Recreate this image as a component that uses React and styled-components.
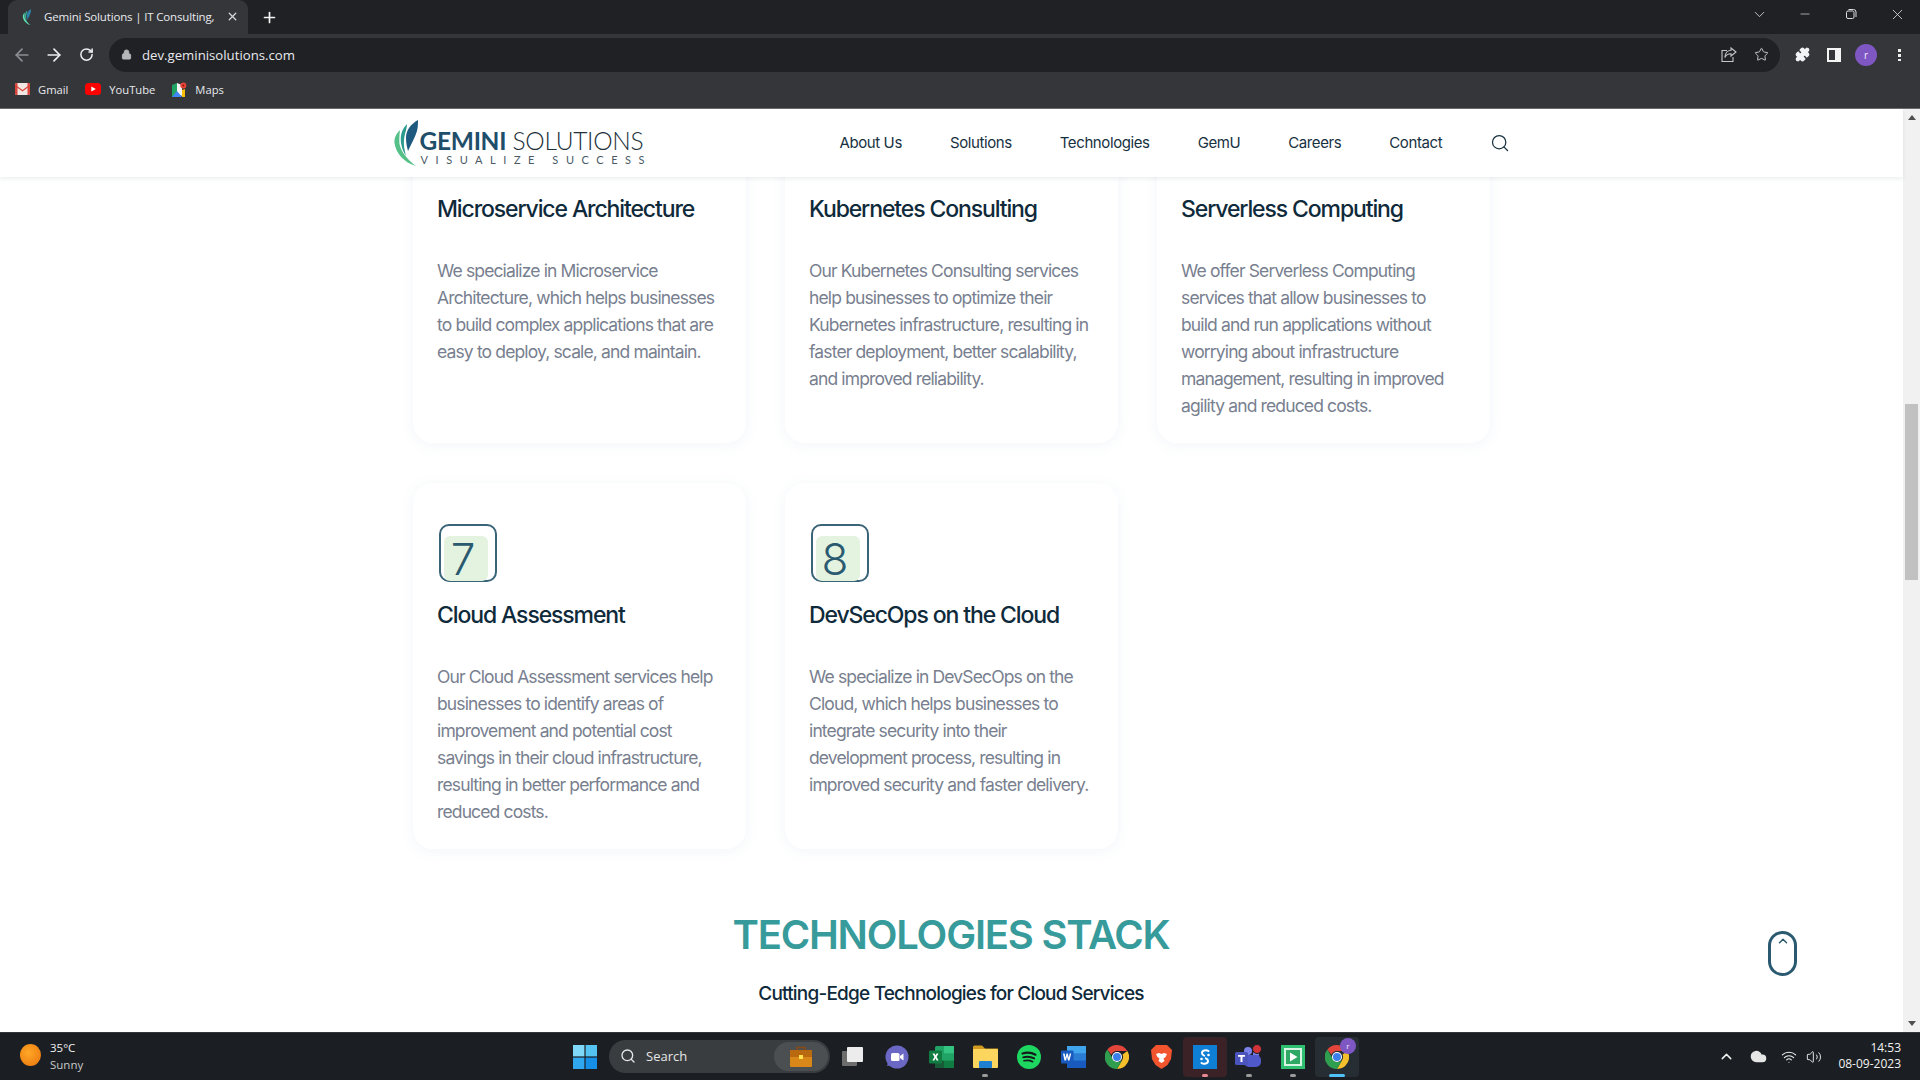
import React from "react";
import styled, { createGlobalStyle } from "styled-components";
import {
  ArrowLeft, ArrowRight, RotateCw, Lock, Star, Puzzle, Search, ChevronDown, Minus, X, Plus, ChevronUp, Wifi, Volume2, Cloud,
} from "lucide-react";

const Global = createGlobalStyle`
  html, body { margin: 0; padding: 0; background: #fff; }
  * { box-sizing: border-box; }
  body { font-family: "Inter", "Liberation Sans", sans-serif; }
`;

const Window = styled.div`
  width: 1920px; height: 1080px; display: flex; flex-direction: column; overflow: hidden;
`;

/* ---------- browser chrome ---------- */
const TabStrip = styled.div`
  height: 34px; background: #202124; display: flex; align-items: flex-end; padding-left: 8px; flex: none;
`;
const Tab = styled.div`
  width: 240px; height: 34px; background: #35363a; border-radius: 9px 9px 0 0;
  display: flex; align-items: center; padding: 0 7px 1px 11px; color: #e8eaed;
  font: 11.5px "Open Sans", "Noto Sans", sans-serif;
`;
const TabTitle = styled.span`
  margin-left: 9px; width: 175px; white-space: nowrap; letter-spacing: -0.16px;
`;
const TabClose = styled.div`
  margin-left: 7px; display: flex; color: #d8d8d8;
`;
const StripAction = styled.div`
  margin-left: 13px; height: 34px; display: flex; align-items: center; color: #f1f3f4;
`;
const WindowControls = styled.div`
  margin-left: auto; height: 34px; display: flex; align-items: center; color: #dadce0;
`;
const ControlSlot = styled.div`
  width: 46px; display: flex; justify-content: center; align-items: center; padding-bottom: 6px;
`;
const RestoreIcon = () => (
  <svg width="12" height="12" viewBox="0 0 12 12" fill="none" stroke="currentColor" strokeWidth="1">
    <rect x="1.5" y="3" width="7.5" height="7.5" rx="1.5" />
    <path d="M3.5 1.5h5a2.5 2.5 0 0 1 2.5 2.5v5" />
  </svg>
);
const ShareIcon = () => (
  <svg width="16" height="15" viewBox="0 0 16 15" fill="none" stroke="currentColor" strokeWidth="1.1">
    <path d="M6 3.5H1v11h11V10" />
    <path d="M10 1l5 4-5 4V6.800C7 6.800 5 8 3.800 10.500 4 6.500 6.500 3.400 10 3.200z" />
  </svg>
);

const Toolbar = styled.div`
  height: 38px; background: #35363a; display: flex; align-items: center; flex: none; padding: 3px 0 0 6px;
`;
const NavButton = styled.div`
  width: 32px; display: flex; align-items: center; justify-content: center; color: ${(p) => (p.$off ? "#8d8f94" : "#eceef0")};
`;
const Omnibox = styled.div`
  width: 1671px; height: 34px; margin-left: 7px; background: #202124; border-radius: 17px;
  display: flex; align-items: center; padding: 0 3px 0 12px; color: #e8eaed;
  font: 13.2px "Open Sans", "Noto Sans", sans-serif;
`;
const UrlText = styled.span`
  margin-left: 10px; flex: 1;
`;
const OmniIcon = styled.div`
  width: 32px; display: flex; justify-content: center; color: #c4c7c9;
`;
const ToolGroup = styled.div`
  margin-left: 6px; display: flex; align-items: center;
`;
const ToolIcon = styled.div`
  width: 32px; display: flex; justify-content: center; color: #f1f3f4;
`;
const Avatar = styled.div`
  width: 22px; height: 22px; border-radius: 50%; background: #7e57c2; color: #f3e8ff;
  font: 10px "Open Sans", sans-serif; display: flex; align-items: center; justify-content: center;
`;
const BadgeAvatar = styled(Avatar)`
  position: absolute; top: 1px; right: 3px; width: 16px; height: 16px; font-size: 8px;
`;
const Dots = styled.div`
  width: 3px; height: 13px; margin-left: 16px;
  background: radial-gradient(circle, #eee 1.6px, transparent 1.9px) 0 0 / 3px 5px;
`;
const SidePanel = styled.div`
  width: 14px; height: 14px; border: 2px solid #f4f4f4; border-right-width: 6px; background: #35363a;
`;

const BookmarksBar = styled.div`
  height: 37px; background: #35363a; border-bottom: 1px solid #6a6b6e; display: flex; align-items: center; flex: none;
  padding: 0 0 2px 15px; color: #e8eaed; font: 11.2px "Open Sans", "Noto Sans", sans-serif;
`;
const Bookmark = styled.div`
  display: flex; align-items: center; gap: 8px; margin-right: 17px;
`;

const GmailIcon = () => (
  <svg width="15" height="12" viewBox="0 0 15 12">
    <rect width="15" height="12" rx="1.5" fill="#f2e6e3" />
    <path d="M0 1.5 7.5 7 15 1.5V3L7.5 8.5 0 3z" fill="#d9453a" />
    <path d="M0 1.5C0 .5.6 0 1.5 0L2.5 0V12H1.5C.6 12 0 11.5 0 10.5zM15 1.5C15 .5 14.4 0 13.5 0L12.5 0V12H13.5c.9 0 1.5-.5 1.5-1.5z" fill="#d9453a" />
  </svg>
);
const YouTubeIcon = () => (
  <svg width="16" height="12" viewBox="0 0 16 12">
    <rect width="16" height="12" rx="3.5" fill="#f00" />
    <path d="M6.3 3.4 10.8 6 6.3 8.6z" fill="#fff" />
  </svg>
);
const MapsIcon = () => (
  <svg width="15" height="15" viewBox="0 0 15 15">
    <path d="M0 3 5 1v13L0 15z" fill="#1fa463" />
    <path d="M5 1l5 2v11l-5-2z" fill="#f1f3f4" />
    <path d="M5 9l-5 6h10z" fill="#4285f4" />
    <path d="M10 8l3-1v8h-3z" fill="#fbbc04" />
    <circle cx="11.3" cy="3.6" r="3" fill="#ea4335" />
    <circle cx="11.3" cy="3.6" r="1" fill="#7c1d16" />
  </svg>
);

/* ---------- page ---------- */
const Viewport = styled.div`
  flex: 1; display: flex; min-height: 0; background: #fff;
`;
const Page = styled.div`
  flex: 1; display: flex; flex-direction: column; min-width: 0;
`;
const Header = styled.header`
  height: 68px; flex: none; background: #fff; box-shadow: 0 2px 4px rgba(30, 50, 70, 0.08); position: relative; z-index: 2;
  display: flex; justify-content: center;
`;
const HeaderInner = styled.div`
  width: 1120px; display: flex; align-items: center; padding-bottom: 1px;
`;
const LogoWrap = styled.div`
  display: flex; align-items: center; width: 253px; flex: none; padding-left: 2px;
  svg { flex: none; }
`;
const LogoText = styled.div`
  margin-left: 1px; display: flex; flex-direction: column; padding-top: 8px;
`;
const LogoName = styled.div`
  font: 300 24.5px/26px "Lato", "Open Sans", sans-serif; color: #22303a; white-space: nowrap; letter-spacing: -0.3px;
`;
const LogoStrong = styled.span`
  color: #1f4e6b; font-weight: 700;
`;
const LogoTag = styled.div`
  font: 400 11px/11px "Lato", sans-serif; color: #4a5a66; letter-spacing: 7.55px; margin-left: 1px; white-space: nowrap;
`;
const Nav = styled.nav`
  margin-left: 195px; display: flex; gap: 48px; align-items: center;
`;
const NavLink = styled.a`
  font: 400 15px/20px "Inter", sans-serif; color: #17313f; letter-spacing: -0.4px; white-space: nowrap;
`;
const SearchBtn = styled.div`
  margin-left: 48px; display: flex; color: #17313f;
`;

const Scroller = styled.div`
  flex: 1; overflow: hidden; position: relative; min-height: 0;
`;
const Content = styled.div`
  margin-top: -100px;
`;
const CardGrid = styled.div`
  width: 1077px; margin: 0 auto; display: grid; grid-template-columns: repeat(3, 333px); gap: 40px 39px;
`;
const Card = styled.article`
  height: 366px; background: #fff; border-radius: 20px; padding: 41px 27px 0 24px; box-shadow: 0 2px 14px rgba(70, 110, 150, 0.07);
`;
const NumberBadge = styled.div`
  width: 58px; height: 58px; margin-left: 2px; border: 2px solid #3a6478; border-radius: 10px; position: relative;
  display: flex; align-items: center; justify-content: center;
  font: 300 44px/1 "Inter", sans-serif; color: #2b5a70; padding: 12px 10px 0 0;
  &::before {
    content: ""; position: absolute; left: 3px; top: 10px; width: 44px; height: 45px; border-radius: 6px; background: #e3f3e0;
  }
`;
const NumberText = styled.span`
  position: relative;
`;
const CardTitle = styled.h3`
  margin: 18px 0 0; font: 500 23px/30px "Inter", sans-serif; color: #0f2a3a; letter-spacing: -1.12px; white-space: nowrap;
`;
const CardBody = styled.p`
  margin: 33px 0 0; font: 400 17.5px/27px "Inter", sans-serif; color: #78808f; letter-spacing: -0.86px;
`;
const Section = styled.section`
  text-align: center; margin-top: 61px; padding-right: 1px;
`;
const SectionTitle = styled.h2`
  margin: 0; font: 600 40px/50px "Inter", sans-serif; color: #389b9b; letter-spacing: -1.2px;
`;
const SectionSub = styled.p`
  margin: 21px 0 0; font: 500 19px/26px "Inter", sans-serif; color: #0f2a3a; letter-spacing: -0.8px;
`;
const ScrollTop = styled.div`
  position: absolute; left: 1768px; top: 754px; width: 29px; height: 45px; border: 3px solid #2b5a70; border-radius: 15px;
  display: flex; justify-content: center; color: #2b5a70;
`;

const Scrollbar = styled.div`
  width: 17px; flex: none; background: #f1f1f1; display: flex; flex-direction: column; align-items: center; position: relative;
`;
const ScrollThumb = styled.div`
  position: absolute; top: 295px; left: 2px; width: 13px; height: 176px; background: #c1c1c1;
`;
const ScrollArrow = styled.div`
  height: 17px; display: flex; align-items: center; justify-content: center;
  &:last-child { margin-top: auto; }
`;
const Tri = styled.div`
  width: 0; height: 0; border-left: 4px solid transparent; border-right: 4px solid transparent;
  ${(p) => (p.$down ? "border-top: 5px solid #505050;" : "border-bottom: 5px solid #505050;")}
`;

/* ---------- taskbar ---------- */
const Taskbar = styled.div`
  height: 48px; flex: none; background: #1b1f23; border-top: 1px solid #33373b; display: flex; align-items: center; color: #f2f2f2; position: relative;
  font: 11px "Open Sans", "Noto Sans", sans-serif;
`;
const Weather = styled.div`
  width: 563px; padding: 0 0 3px 20px; display: flex; align-items: center; gap: 9px; flex: none;
`;
const Sun = styled.div`
  width: 21px; height: 22px; border-radius: 50%; background: radial-gradient(circle at 40% 40%, #ffa726, #e8730c);
`;
const WeatherText = styled.div`
  display: flex; flex-direction: column; line-height: 17px; font-size: 11.5px; margin-top: 1px;
`;
const Muted = styled.span`
  color: #c9c9c9;
`;
const AppSlot = styled.div`
  width: 44px; height: 40px; display: flex; align-items: center; justify-content: center; position: relative; flex: none; border-radius: 4px;
  background: ${(p) => p.$bg || "transparent"};
`;
const RunDot = styled.div`
  position: absolute; bottom: 0; left: 50%; transform: translateX(-50%); height: 3px; border-radius: 2px;
  width: ${(p) => p.$w || 6}px; background: ${(p) => p.$c || "#9b9b9b"};
`;
const SearchPill = styled.div`
  width: 221px; height: 33px; border-radius: 17px; background: #3a3d40; margin: 0 1px 0 2px; display: flex; align-items: center; padding: 0 0 1px 11px; gap: 10px;
  font-size: 13px; color: #e6e6e6; position: relative; flex: none;
`;
const PillBadge = styled.div`
  position: absolute; right: 2px; top: 2px; width: 54px; height: 29px; border-radius: 15px; background: #4c4f52;
  display: flex; align-items: center; justify-content: center;
`;
const Tray = styled.div`
  margin-left: auto; display: flex; align-items: center; padding-right: 19px;
`;
const TrayIcon = styled.div`
  width: ${(p) => p.$w || 32}px; display: flex; justify-content: center; color: #f2f2f2;
`;
const Clock = styled.div`
  margin-left: 13px; text-align: right; line-height: 16px; font-size: 12px; width: 64px; margin-top: -2px;
`;

const WinLogo = () => (
  <svg width="24" height="24" viewBox="0 0 24 24">
    <rect width="11.4" height="11.4" fill="#7fd8f8" />
    <rect x="12.6" width="11.4" height="11.4" fill="#55c3f2" />
    <rect y="12.6" width="11.4" height="11.4" fill="#2fa8ef" />
    <rect x="12.6" y="12.6" width="11.4" height="11.4" fill="#1590e6" />
  </svg>
);
const TaskView = () => (
  <svg width="22" height="22" viewBox="0 0 22 22">
    <rect y="5" width="15" height="15" rx="1" fill="#6d6d6d" />
    <rect x="5" y="1" width="16" height="15" rx="1" fill="#ececec" />
  </svg>
);
const Meet = () => (
  <svg width="24" height="24" viewBox="0 0 24 24">
    <circle cx="12" cy="12" r="11.5" fill="#6b67c4" />
    <path d="M2 21l2-6 5 5z" fill="#6b67c4" />
    <rect x="6" y="8" width="8.5" height="8" rx="1.5" fill="#fff" />
    <path d="M15 11l3.5-2.5v7L15 13z" fill="#fff" />
  </svg>
);
const Excel = () => (
  <svg width="25" height="22" viewBox="0 0 25 22">
    <rect x="6" width="19" height="22" rx="1.5" fill="#21a366" />
    <rect x="15" width="10" height="7.3" fill="#33c481" />
    <rect x="15" y="14.6" width="10" height="7.4" fill="#107c41" />
    <rect x="6" y="14.6" width="9" height="7.4" fill="#185c37" />
    <rect y="4.5" width="13" height="13" rx="1" fill="#107c41" />
    <path d="M3.5 7.5h2l1 2 1-2h2L7.6 11l2 3.5h-2l-1.1-2.2L5.4 14.5h-2l2-3.5z" fill="#fff" />
  </svg>
);
const Folder = () => (
  <svg width="25" height="23" viewBox="0 0 25 23">
    <path d="M0 2a1.5 1.5 0 0 1 1.5-1.5H9l3 3h13V6H0z" fill="#d29b1f" />
    <rect y="4" width="25" height="19" rx="1" fill="#fcd55f" />
    <rect x="6" y="16" width="13" height="7" rx="1" fill="#1f7fd0" />
  </svg>
);
const Spotify = () => (
  <svg width="24" height="24" viewBox="0 0 24 24" fill="none" strokeLinecap="round">
    <circle cx="12" cy="12" r="12" fill="#1ed760" />
    <path d="M5.5 8.5c4.5-1.3 9-1 13 1.2" stroke="#15191c" strokeWidth="2.2" />
    <path d="M6.2 12.3c3.8-1 7.5-.7 11 1.1" stroke="#15191c" strokeWidth="1.9" />
    <path d="M7 15.8c3-.7 6-.5 8.7.9" stroke="#15191c" strokeWidth="1.6" />
  </svg>
);
const Word = () => (
  <svg width="25" height="22" viewBox="0 0 25 22">
    <rect x="6" width="19" height="22" rx="1.5" fill="#2b7cd3" />
    <rect x="6" width="19" height="7.3" fill="#41a5ee" />
    <rect x="6" y="14.6" width="19" height="7.4" fill="#185abd" />
    <rect y="4.5" width="12.5" height="13" rx="1" fill="#185abd" />
    <path d="M2 7.5h1.6l.9 4.3 1-4.3h1.3l1 4.3.9-4.3h1.5L8.5 14.5H7L6 10.5l-1 4H3.5z" fill="#fff" />
  </svg>
);
const ChromeLogo = () => (
  <svg width="24" height="24" viewBox="0 0 24 24">
    <path d="M12 0a12 12 0 0 1 10.4 6H12a6 6 0 0 0-5.6 3.8L2.4 4.5A12 12 0 0 1 12 0z" fill="#e2453a" />
    <path d="M22.4 6A12 12 0 0 1 12 24l4.9-8.5A6 6 0 0 0 17.5 9.5L22.4 6z" fill="#f5c02c" />
    <path d="M12 24A12 12 0 0 1 2.4 4.5l4.8 8.3A6 6 0 0 0 16.9 15.5L12 24z" fill="#2f9e4f" />
    <circle cx="12" cy="12" r="5" fill="#fff" />
    <circle cx="12" cy="12" r="4" fill="#3c7fea" />
  </svg>
);
const Brave = () => (
  <svg width="21" height="24" viewBox="0 0 21 24">
    <path d="M5 0h11l2.500 2.500L21 5l-1 9-3.500 6L10.500 24 4.500 20 1 14 0 5l2.500-2.500z" fill="#f2542d" />
    <path d="M5 9l3-1 2.500 1L13 8l3 1-1.500 3-2 1.500 1 2.500-3 2-3-2 1-2.500-2-1.500z" fill="#fff" />
  </svg>
);
const StudioS = () => (
  <svg width="24" height="24" viewBox="0 0 24 24" fill="none">
    <rect width="24" height="24" fill="#0f7fd6" />
    <path d="M15.500 6C13 4.500 9 5.500 9 8c0 1.400 1 2.200 2.200 2.600" stroke="#fff" strokeWidth="2" strokeLinecap="round" />
    <path d="M8.500 18c2.500 1.500 6.500.5 6.500-2 0-1.400-1-2.200-2.200-2.600" stroke="#fff" strokeWidth="2" strokeLinecap="round" />
    <circle cx="15.500" cy="10" r="1.300" fill="#fff" />
    <circle cx="8.500" cy="14" r="1.300" fill="#fff" />
  </svg>
);
const Teams = () => (
  <svg width="28" height="26" viewBox="0 0 28 26">
    <circle cx="21" cy="10" r="3" fill="#7b83eb" />
    <rect x="9" y="11" width="17" height="12" rx="5" fill="#5059c9" />
    <circle cx="13" cy="7" r="4" fill="#7b83eb" />
    <rect y="8" width="13" height="13" rx="1.500" fill="#4b53bc" />
    <path d="M3 11h7v1.800H7.500V18h-2v-5.200H3z" fill="#fff" />
    <circle cx="22" cy="5" r="4.500" fill="#d13438" stroke="#1b1f23" strokeWidth="1" />
  </svg>
);
const Player = () => (
  <svg width="24" height="24" viewBox="0 0 24 24">
    <rect width="24" height="24" fill="#2fbf71" />
    <rect x="3" y="3" width="18" height="18" fill="#d8f5e4" />
    <rect x="5" y="5" width="14" height="14" fill="#2fa866" />
    <path d="M9 7.500 16.500 12 9 16.500z" fill="#fff" />
  </svg>
);
const Suitcase = () => (
  <svg width="22" height="21" viewBox="0 0 22 21">
    <path d="M7 4V1.500h8V4" fill="none" stroke="#8a4a12" strokeWidth="1.500" />
    <rect y="4" width="22" height="17" rx="1" fill="#d98718" />
    <rect y="4" width="22" height="7" fill="#b9690f" />
    <rect x="9" y="9" width="4" height="4" fill="#ffe14d" />
  </svg>
);
const LogoLeaf = () => (
  <svg width="25" height="46" viewBox="0 0 25 46">
    <path d="M6 10C2 14 0 18 .5 23 2 33 9 42 22 46 14 40 7 32 5.500 24 5 19 5.500 14 6 10z" fill="#55c088" />
    <path d="M13 4C8 9 6 15 7 23c1 6 3 10 5 13-2-8-3-14-1-22 1-4 2-7 2-10z" fill="#2d9a90" />
    <path d="M24 0c-7 4-12 10-12 18 0 5 1 9 2 13 3-7 7-13 9-20 1-4 1-8 1-11z" fill="#1e5a80" />
  </svg>
);
const Favicon = () => (
  <svg width="16" height="16" viewBox="0 0 25 46">
    <path d="M6 10C2 14 0 18 .5 23 2 33 9 42 22 46 14 40 7 32 5.500 24 5 19 5.500 14 6 10z" fill="#5fe0b0" />
    <path d="M13 4C8 9 6 15 7 23c1 6 3 10 5 13-2-8-3-14-1-22 1-4 2-7 2-10z" fill="#35c0a8" />
    <path d="M24 0c-7 4-12 10-12 18 0 5 1 9 2 13 3-7 7-13 9-20 1-4 1-8 1-11z" fill="#2f80a8" />
  </svg>
);

/* The first row is scrolled under the sticky header: its number badges are out of sight. */
const cards = [
  { title: "Microservice Architecture", body: "We specialize in Microservice Architecture, which helps businesses to build complex applications that are easy to deploy, scale, and maintain." },
  { title: "Kubernetes Consulting", body: "Our Kubernetes Consulting services help businesses to optimize their Kubernetes infrastructure, resulting in faster deployment, better scalability, and improved reliability." },
  { title: "Serverless Computing", body: "We offer Serverless Computing services that allow businesses to build and run applications without worrying about infrastructure management, resulting in improved agility and reduced costs." },
  { title: "Cloud Assessment", n: 7, body: "Our Cloud Assessment services help businesses to identify areas of improvement and potential cost savings in their cloud infrastructure, resulting in better performance and reduced costs." },
  { title: "DevSecOps on the Cloud", n: 8, body: "We specialize in DevSecOps on the Cloud, which helps businesses to integrate security into their development process, resulting in improved security and faster delivery." },
];

const navItems = ["About Us", "Solutions", "Technologies", "GemU", "Careers", "Contact"];

export default function App() {
  return (
    <Window>
      <Global />
      <TabStrip>
        <Tab>
          <Favicon />
          <TabTitle>Gemini Solutions | IT Consulting,</TabTitle>
          <TabClose><X size={13} strokeWidth={2.4} /></TabClose>
        </Tab>
        <StripAction><Plus size={17} strokeWidth={2.4} /></StripAction>
        <WindowControls>
          <ControlSlot><ChevronDown size={17} strokeWidth={1.2} /></ControlSlot>
          <ControlSlot><Minus size={14} strokeWidth={1.2} /></ControlSlot>
          <ControlSlot><RestoreIcon /></ControlSlot>
          <ControlSlot><X size={17} strokeWidth={1.2} /></ControlSlot>
        </WindowControls>
      </TabStrip>
      <Toolbar>
        <NavButton $off><ArrowLeft size={20} strokeWidth={2} /></NavButton>
        <NavButton><ArrowRight size={20} strokeWidth={2} /></NavButton>
        <NavButton><RotateCw size={15} strokeWidth={2.4} /></NavButton>
        <Omnibox>
          <Lock size={11} fill="#b5b7b9" color="#b5b7b9" />
          <UrlText>dev.geminisolutions.com</UrlText>
          <OmniIcon><ShareIcon /></OmniIcon>
          <OmniIcon><Star size={15} strokeWidth={1.6} /></OmniIcon>
        </Omnibox>
        <ToolGroup>
          <ToolIcon><Puzzle size={15} fill="#f1f3f4" /></ToolIcon>
          <ToolIcon><SidePanel /></ToolIcon>
          <ToolIcon><Avatar>r</Avatar></ToolIcon>
          <Dots />
        </ToolGroup>
      </Toolbar>
      <BookmarksBar>
        <Bookmark><GmailIcon />Gmail</Bookmark>
        <Bookmark><YouTubeIcon />YouTube</Bookmark>
        <Bookmark><MapsIcon />Maps</Bookmark>
      </BookmarksBar>
      <Viewport>
        <Page>
          <Header>
            <HeaderInner>
              <LogoWrap>
                <LogoLeaf />
                <LogoText>
                  <LogoName><LogoStrong>GEMINI</LogoStrong> SOLUTIONS</LogoName>
                  <LogoTag>VISUALIZE SUCCESS</LogoTag>
                </LogoText>
              </LogoWrap>
              <Nav>
                {navItems.map((n) => <NavLink key={n}>{n}</NavLink>)}
              </Nav>
              <SearchBtn><Search size={20} strokeWidth={1.5} /></SearchBtn>
            </HeaderInner>
          </Header>
          <Scroller>
            <Content>
              <CardGrid>
                {cards.map((c) => (
                  <Card key={c.title}>
                    <NumberBadge><NumberText>{c.n}</NumberText></NumberBadge>
                    <CardTitle>{c.title}</CardTitle>
                    <CardBody>{c.body}</CardBody>
                  </Card>
                ))}
              </CardGrid>
              <Section>
                <SectionTitle>TECHNOLOGIES STACK</SectionTitle>
                <SectionSub>Cutting-Edge Technologies for Cloud Services</SectionSub>
              </Section>
            </Content>
            <ScrollTop><ChevronUp size={14} strokeWidth={2.5} /></ScrollTop>
          </Scroller>
        </Page>
        <Scrollbar>
          <ScrollArrow><Tri /></ScrollArrow>
          <ScrollThumb />
          <ScrollArrow><Tri $down /></ScrollArrow>
        </Scrollbar>
      </Viewport>
      <Taskbar>
        <Weather>
          <Sun />
          <WeatherText><span>35°C</span><Muted>Sunny</Muted></WeatherText>
        </Weather>
        <AppSlot><WinLogo /></AppSlot>
        <SearchPill>
          <Search size={16} strokeWidth={2} />Search
          <PillBadge><Suitcase /></PillBadge>
        </SearchPill>
        <AppSlot><TaskView /></AppSlot>
        <AppSlot><Meet /></AppSlot>
        <AppSlot><Excel /></AppSlot>
        <AppSlot><Folder /><RunDot /></AppSlot>
        <AppSlot><Spotify /></AppSlot>
        <AppSlot><Word /></AppSlot>
        <AppSlot><ChromeLogo /></AppSlot>
        <AppSlot><Brave /></AppSlot>
        <AppSlot $bg="#3a2226"><StudioS /><RunDot $c="#e88a94" /></AppSlot>
        <AppSlot><Teams /><RunDot /></AppSlot>
        <AppSlot><Player /><RunDot /></AppSlot>
        <AppSlot $bg="#262d33">
          <ChromeLogo />
          <BadgeAvatar>r</BadgeAvatar>
          <RunDot $w={16} $c="#4fc3f7" />
        </AppSlot>
        <Tray>
          <TrayIcon><ChevronUp size={17} strokeWidth={2} /></TrayIcon>
          <TrayIcon><Cloud size={17} fill="#e6e6e6" color="#e6e6e6" /></TrayIcon>
          <TrayIcon $w={30}><Wifi size={16} strokeWidth={1.6} /></TrayIcon>
          <TrayIcon $w={20}><Volume2 size={16} strokeWidth={1.4} /></TrayIcon>
          <Clock>14:53<br />08-09-2023</Clock>
        </Tray>
      </Taskbar>
    </Window>
  );
}
